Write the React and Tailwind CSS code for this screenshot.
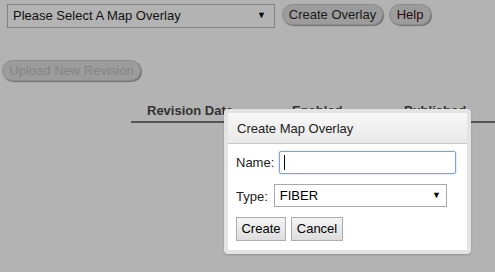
import React from "react";

const pillBtn =
  "h-[21px] whitespace-nowrap rounded-full bg-[#9c9c9c] px-0 text-[13px] leading-[19px] shadow-[1px_1px_1px_#6e6e6e] border border-[#8e8e8e]";

const dlgBtn =
  "h-[24px] border border-[#adadad] bg-gradient-to-b from-[#f4f4f4] to-[#dddddd] px-[4px] text-[13px] text-black leading-[22px]";

export default function App() {
  return (
    <div className="relative h-[272px] w-[495px] overflow-hidden bg-[#b3b3b3] font-['Liberation_Sans',Arial,sans-serif] text-[13px] text-black">
      {/* toolbar */}
      <div className="flex items-start pl-[7px] pt-[4px]">
        <div className="flex h-[24px] w-[268px] items-center justify-between border border-[#828282] pl-[5px] pr-[8px]">
          <span className="text-[13px] text-[#111]">Please Select A Map Overlay</span>
          <span className="text-[9px] text-black">▼</span>
        </div>
        <button className={`${pillBtn} ml-[7px] w-[101px] text-[#1a1a1a]`}>Create Overlay</button>
        <button className={`${pillBtn} ml-[6px] w-[42px] text-[#2a0a0a]`}>Help</button>
      </div>

      <button className={`${pillBtn} ml-[2px] mt-[32px] w-[139px] text-[#858585]`}>
        Upload New Revision
      </button>

      {/* table header */}
      <div className="ml-[131px] mt-[19px] flex h-[23px] items-center border-b-2 border-[#545454] text-[13px] font-bold text-[#333]">
        <span className="w-[161px] whitespace-nowrap pl-[16px]">Revision Date</span>
        <span className="w-[112px] whitespace-nowrap">Enabled</span>
        <span className="whitespace-nowrap">Published</span>
      </div>

      {/* dialog */}
      <div className="absolute left-[224px] top-[109px] w-[247px] rounded-[4px] bg-[#e3e3e3] p-[4px] shadow-[0_1px_2px_rgba(0,0,0,0.2)]">
        <div className="h-[31px] border-b border-[#c9c9c9] bg-gradient-to-b from-[#f7f7f7] to-[#e8e8e8] pl-[9px] leading-[31px] text-[#222]">
          Create Map Overlay
        </div>
        <div className="bg-white px-[8px] pb-[9px] pt-[7px]">
          <div className="flex items-center">
            <span className="text-[#222]">Name:</span>
            <div className="ml-[5px] flex h-[23px] w-[177px] items-center rounded-[2px] border border-[#7da2e3] pl-[4px] shadow-[0_0_2px_#9fbef0]">
              <span className="h-[15px] w-px bg-black" />
            </div>
          </div>
          <div className="mt-[10px] flex items-start">
            <span className="mt-[3px] text-[#222]">Type:</span>
            <div className="ml-[6px] flex h-[23px] w-[173px] items-center justify-between border border-[#a9a9a9] pl-[5px] pr-[5px]">
              <span>FIBER</span>
              <span className="text-[9px]">▼</span>
            </div>
          </div>
          <div className="mt-[10px] flex gap-[5px]">
            <button className={`${dlgBtn} w-[50px]`}>Create</button>
            <button className={`${dlgBtn} w-[52px]`}>Cancel</button>
          </div>
        </div>
      </div>
    </div>
  );
}
